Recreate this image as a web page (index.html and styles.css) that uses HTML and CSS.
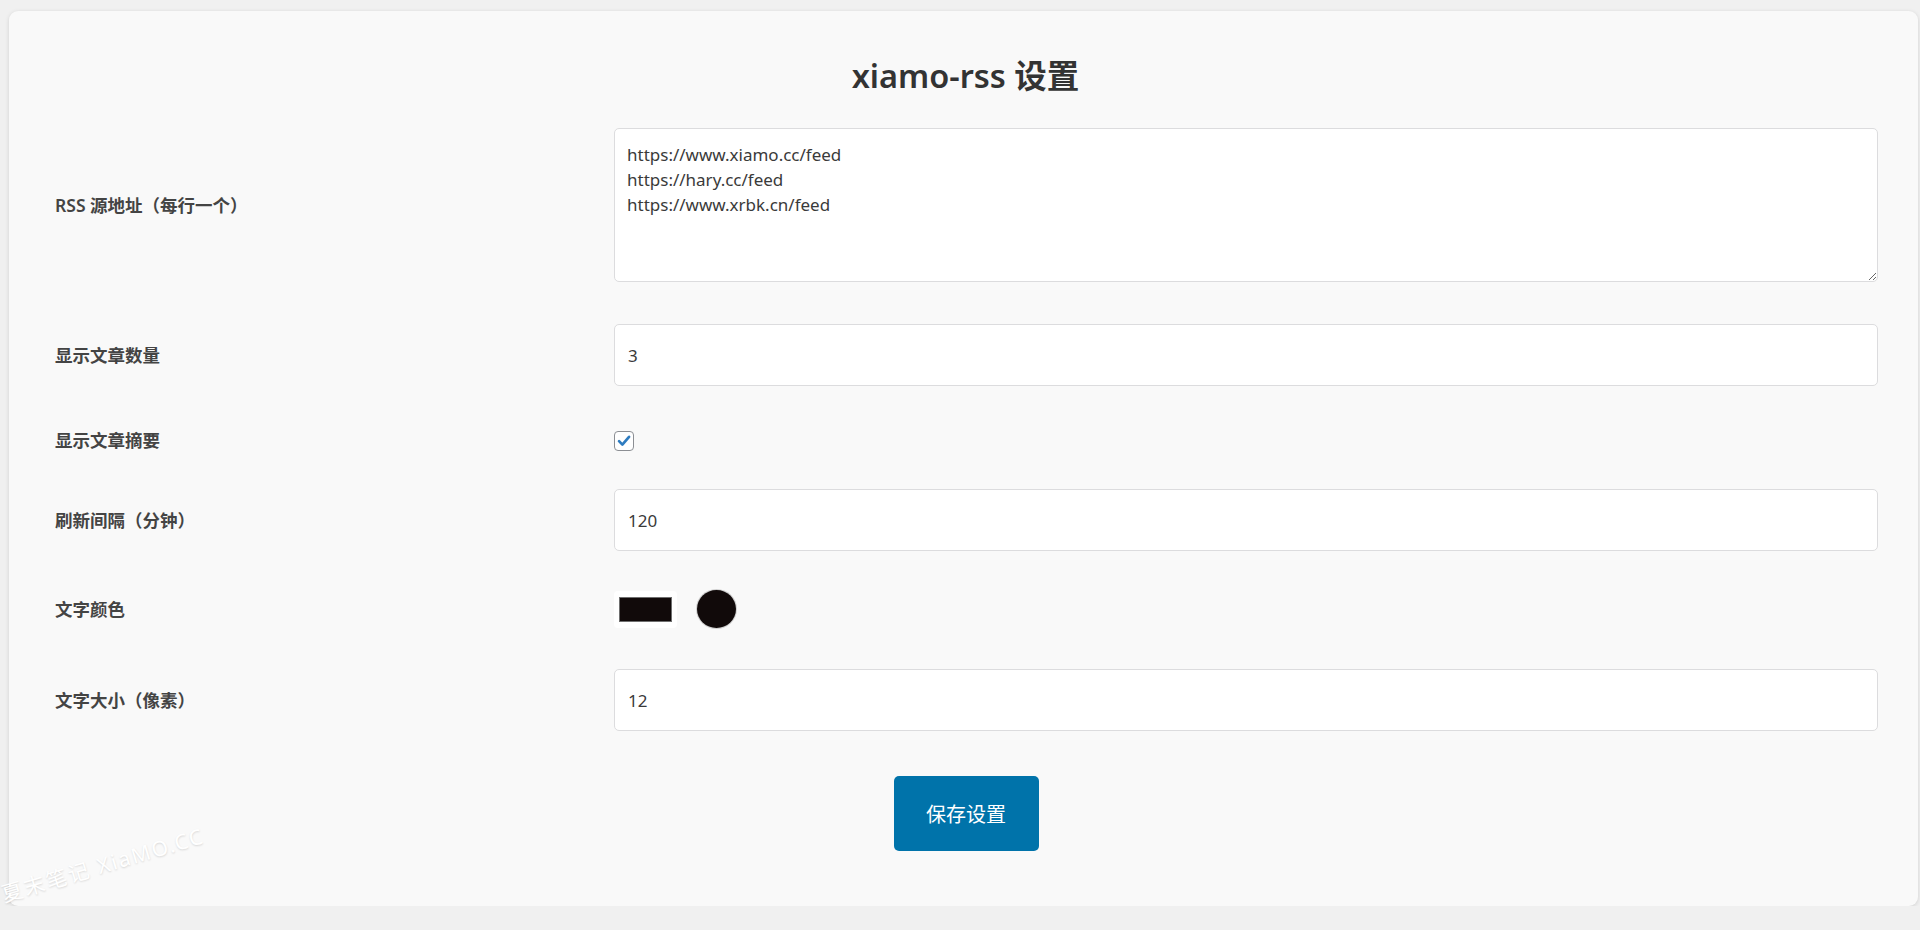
FILE: index.html
```html
<!DOCTYPE html>
<html lang="zh-CN">
<head>
    <meta charset="UTF-8">
    <meta name="viewport" content="width=device-width, initial-scale=1.0">
    <title>xiamo-rss 设置</title>
    <link rel="stylesheet" href="styles.css">
</head>
<body>
    <div class="wrap">
        <div class="card">
            <h1>xiamo-rss 设置</h1>

            <form class="settings">
                <div class="row">
                    <label class="label" for="feeds">RSS 源地址（每行一个）</label>
                    <div class="field">
                        <textarea id="feeds" class="textarea">https://www.xiamo.cc/feed
https://hary.cc/feed
https://www.xrbk.cn/feed</textarea>
                    </div>
                </div>

                <div class="row">
                    <label class="label" for="count">显示文章数量</label>
                    <div class="field">
                        <input id="count" class="input" type="text" value="3">
                    </div>
                </div>

                <div class="row row-check">
                    <label class="label">显示文章摘要</label>
                    <div class="field">
                        <span class="checkbox">
                            <svg width="20" height="20" viewBox="0 0 20 20">
                                <path d="M4.5 10.2 L8.2 14 L15.6 5.4" fill="none" stroke="#2e7cc0" stroke-width="3" stroke-linecap="round" stroke-linejoin="round"/>
                            </svg>
                        </span>
                    </div>
                </div>

                <div class="row">
                    <label class="label" for="refresh">刷新间隔（分钟）</label>
                    <div class="field">
                        <input id="refresh" class="input" type="text" value="120">
                    </div>
                </div>

                <div class="row row-color">
                    <label class="label">文字颜色</label>
                    <div class="field">
                        <span class="swatch"><span class="swatch-fill"></span></span>
                        <span class="dot"></span>
                    </div>
                </div>

                <div class="row">
                    <label class="label" for="size">文字大小（像素）</label>
                    <div class="field">
                        <input id="size" class="input" type="text" value="12">
                    </div>
                </div>

                <div class="actions">
                    <button type="button" class="button">保存设置</button>
                </div>
            </form>
        </div>
    </div>

    <div class="watermark">夏末笔记 XiaMO.CC</div>
</body>
</html>
```

FILE: styles.css
```css
body {
    margin: 0;
    background-color: #f0f0f0;
    font-family: "Noto Sans", "Noto Sans CJK SC", sans-serif;
    color: #333;
}

.wrap {
    padding: 11px 2px 0 9px;
}

.card {
    background-color: #f9f9f9;
    border-radius: 9px;
    box-shadow: 0 1px 4px rgba(0, 0, 0, 0.13);
    padding: 45px 40px 55px;
}

h1 {
    margin: 0 0 11px;
    padding-left: 4px;
    text-align: center;
    font-size: 32.5px;
    line-height: 40px;
    font-weight: 600;
    color: #333;
}

.row {
    display: grid;
    grid-template-columns: 565px 1fr;
    align-items: center;
    padding: 21px 0;
}

.row-check {
    padding: 21px 0 15px;
}

.row-color {
    padding: 18px 0 20px;
}

.label {
    padding-left: 6px;
    font-size: 17.5px;
    line-height: 25px;
    font-weight: 600;
    color: #444;
}

.field {
    display: flex;
    align-items: center;
}

.textarea,
.input {
    width: 100%;
    box-sizing: border-box;
    background: #fff;
    border: 1px solid #dcdcde;
    border-radius: 5px;
    font-family: "Noto Sans", "Noto Sans CJK SC", sans-serif;
    font-size: 17px;
    color: #3a3a3a;
    outline: none;
}

.textarea {
    height: 154px;
    padding: 13px 12px;
    line-height: 25px;
    resize: vertical;
}

.input {
    height: 62px;
    padding: 0 13px;
}

.checkbox {
    display: inline-flex;
    width: 20px;
    height: 20px;
    box-sizing: border-box;
    border: 1px solid #8c8f94;
    border-radius: 4px;
    background: #fff;
    align-items: center;
    justify-content: center;
}

.checkbox svg {
    display: block;
}

.swatch {
    display: inline-block;
    padding: 6px 5px;
    background: #fff;
    border-radius: 4px;
}

.swatch-fill {
    display: block;
    width: 51px;
    height: 23px;
    background: #110a0a;
    border: 1px solid #6f6f6f;
}

.dot {
    display: inline-block;
    width: 39px;
    height: 38px;
    margin-left: 20px;
    border-radius: 50%;
    background: #110a0a;
    box-shadow: 0 0 0 1px #d0d0d0;
}

.actions {
    display: flex;
    justify-content: center;
    margin-top: 24px;
    padding-left: 5px;
}

.button {
    width: 145px;
    height: 75px;
    background-color: #0073aa;
    border: none;
    border-radius: 5px;
    color: #fff;
    font-family: "Noto Sans", "Noto Sans CJK SC", sans-serif;
    font-size: 20px;
    cursor: pointer;
}

.watermark {
    position: absolute;
    left: 6px;
    top: 878px;
    transform: rotate(-16.5deg);
    transform-origin: left bottom;
    font-family: "Noto Sans", "Noto Sans CJK SC", sans-serif;
    font-size: 21px;
    letter-spacing: 2px;
    color: #fff;
    text-shadow: 0 1px 2px rgba(0, 0, 0, 0.14);
    white-space: nowrap;
}
```
